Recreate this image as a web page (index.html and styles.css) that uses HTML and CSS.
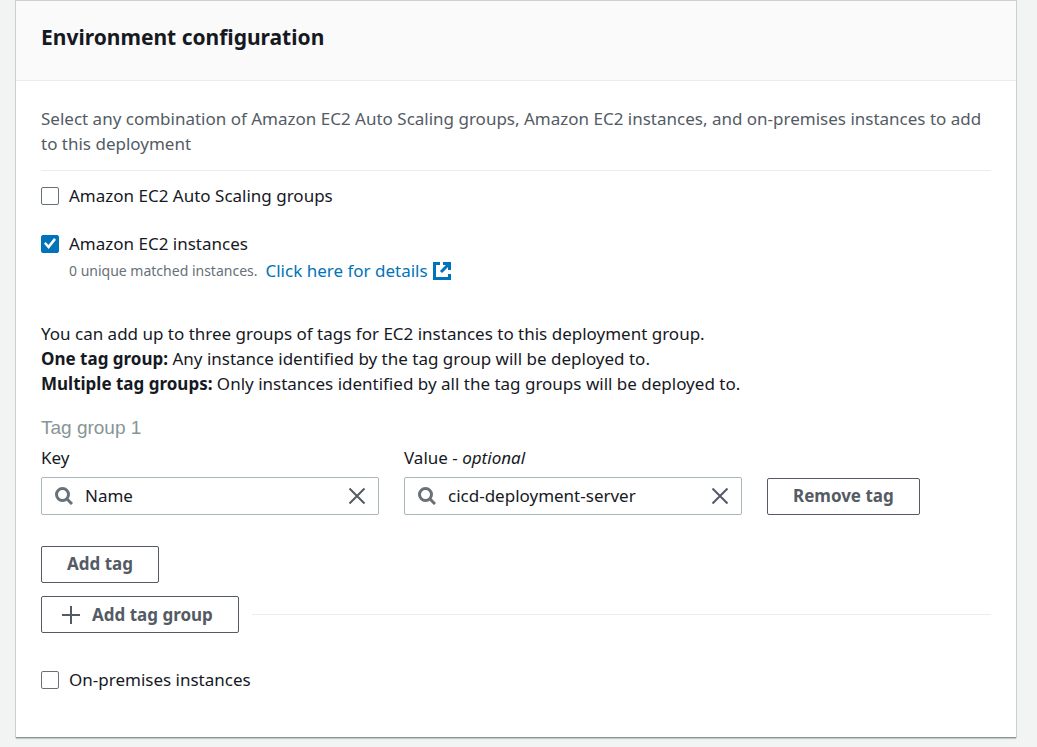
FILE: index.html
```html
<!DOCTYPE html>
<html lang="en">
<head>
<meta charset="utf-8">
<meta name="viewport" content="width=device-width, initial-scale=1">
<title>Environment configuration</title>
<link rel="stylesheet" href="styles.css">
</head>
<body>
<main class="card">
  <header class="card-header"><h2 class="title">Environment configuration</h2></header>
  <div class="card-body">
    <p class="intro">Select any combination of Amazon EC2 Auto Scaling groups, Amazon EC2 instances, and on-premises instances to add to this deployment</p>
    <div class="option option-first">
      <input class="check" type="checkbox" id="asg"><label for="asg">Amazon EC2 Auto Scaling groups</label>
    </div>
    <div class="option">
      <input class="check" type="checkbox" id="ec2" checked><label for="ec2">Amazon EC2 instances</label>
    </div>
    <p class="matched"><span class="matched-count">0 unique matched instances.</span><a class="link" href="#">Click here for details<svg class="external" viewBox="0 0 18 18" aria-hidden="true"><path d="M7 1.500H1.500v15h15V12M10 1.500h6.500V8M16.500 1.500 8 10"/></svg></a></p>
    <div class="help">
      <p>You can add up to three groups of tags for EC2 instances to this deployment group.</p>
      <p><strong>One tag group:</strong> Any instance identified by the tag group will be deployed to.</p>
      <p><strong>Multiple tag groups:</strong> Only instances identified by all the tag groups will be deployed to.</p>
    </div>
    <h3 class="group-title">Tag group 1</h3>
    <div class="tag-row">
      <div class="field">
        <label for="key">Key</label>
        <div class="search">
          <svg class="icon lens" viewBox="0 0 18 18" aria-hidden="true"><circle cx="7.500" cy="7.500" r="6"/><path d="m12 12 5 5"/></svg>
          <input class="search-input" id="key" type="text" value="Name">
          <button class="clear" type="button" aria-label="Clear key"><svg class="icon" viewBox="0 0 18 18" aria-hidden="true"><path d="m1.500 1.500 15 15m0-15-15 15"/></svg></button>
        </div>
      </div>
      <div class="field">
        <label for="value">Value - <em>optional</em></label>
        <div class="search">
          <svg class="icon lens" viewBox="0 0 18 18" aria-hidden="true"><circle cx="7.500" cy="7.500" r="6"/><path d="m12 12 5 5"/></svg>
          <input class="search-input" id="value" type="text" value="cicd-deployment-server">
          <button class="clear" type="button" aria-label="Clear value"><svg class="icon" viewBox="0 0 18 18" aria-hidden="true"><path d="m1.500 1.500 15 15m0-15-15 15"/></svg></button>
        </div>
      </div>
      <div class="remove"><button class="button" type="button">Remove tag</button></div>
    </div>
    <button class="button" type="button">Add tag</button>
    <div class="add-group">
      <button class="button button-icon" type="button"><svg class="icon" viewBox="0 0 18 18" aria-hidden="true"><path d="M9 0v18M0 9h18"/></svg>Add tag group</button>
      <hr class="rule">
    </div>
    <div class="option">
      <input class="check" type="checkbox" id="onprem"><label for="onprem">On-premises instances</label>
    </div>
  </div>
</main>
</body>
</html>
```
FILE: styles.css
```css
* { box-sizing: border-box; }
body {
  margin: 0;
  padding: 1px 21px 8px 16px;
  background: #f2f3f3;
  color: #16191f;
  font: 17px/25px "Noto Sans", "Open Sans", sans-serif;
}
p, h2, h3 { margin: 0; }
.card {
  background: #fff;
  box-shadow: 0 1px 0 #879596, 0 2px 1px #c5cbcb, 0 0 0 1px #cdd1d1;
}
.card-header {
  padding: 21px 25px 27px;
  background: #fafafa;
  border-bottom: 1px solid #eaeded;
}
.title { font-size: 21px; line-height: 31px; font-weight: 700; }
.card-body { padding: 25px 25px 45px; }
.intro {
  padding-bottom: 14px;
  border-bottom: 1px solid #eaeded;
  color: #545b64;
}
.option { display: flex; align-items: center; gap: 10px; }
.option-first { margin: 12px 0 23px; }
.check {
  appearance: none;
  display: grid;
  place-items: center;
  flex: none;
  width: 18px;
  height: 18px;
  margin: 0;
  border: 1px solid #687078;
  border-radius: 2px;
  background: #fff;
}
.check:checked { background: #0073bb; border-color: #0073bb; }
.check:checked::before {
  content: "";
  width: 12px;
  height: 12px;
  background: #fff;
  clip-path: polygon(0 53%, 14% 38%, 37% 62%, 84% 4%, 100% 18%, 39% 96%);
}
.matched { display: flex; align-items: center; gap: 8px; margin-top: 2px; padding-left: 28px; }
.matched-count { color: #687078; font-size: 14px; }
.link { display: flex; align-items: center; gap: 5px; color: #0073bb; text-decoration: none; }
.external { width: 18px; height: 18px; fill: none; stroke: currentColor; stroke-width: 3; }
.help { margin-top: 38px; }
.group-title {
  margin-top: 19px;
  color: #879596;
  font: 400 19px/25px "Liberation Sans", Arial, sans-serif;
}
.tag-row {
  display: grid;
  grid-template-columns: minmax(0, 338fr) minmax(0, 338fr) minmax(152px, 224fr);
  gap: 25px;
  margin: 5px 0 31px;
}
.field label { display: block; margin-bottom: 7px; }
.search {
  display: flex;
  align-items: center;
  gap: 12px;
  height: 38px;
  padding: 0 12px 0 13px;
  border: 1px solid #aab7b8;
  border-radius: 2px;
}
.search-input {
  flex: 1;
  min-width: 0;
  padding: 0 0 2px;
  border: 0;
  outline: 0;
  background: none;
  color: inherit;
  font: inherit;
}
.icon { display: block; flex: none; width: 18px; height: 18px; fill: none; stroke: #545b64; stroke-width: 2; }
.lens { stroke: #687078; stroke-width: 3; }
.clear { padding: 0; border: 0; background: none; }
.remove { align-self: end; }
.button {
  display: flex;
  align-items: center;
  justify-content: center;
  height: 37px;
  padding: 0 25px 2px;
  border: 1px solid #545b64;
  border-radius: 2px;
  background: #fff;
  color: #545b64;
  font: inherit;
  font-weight: 700;
}
.button-icon { gap: 12px; padding: 0 25px 0 20px; }
.add-group { display: flex; align-items: center; gap: 13px; margin: 13px 0 34px; }
.rule { flex: 1; margin: 0; border: 0; border-top: 1px solid #eaeded; }
```
